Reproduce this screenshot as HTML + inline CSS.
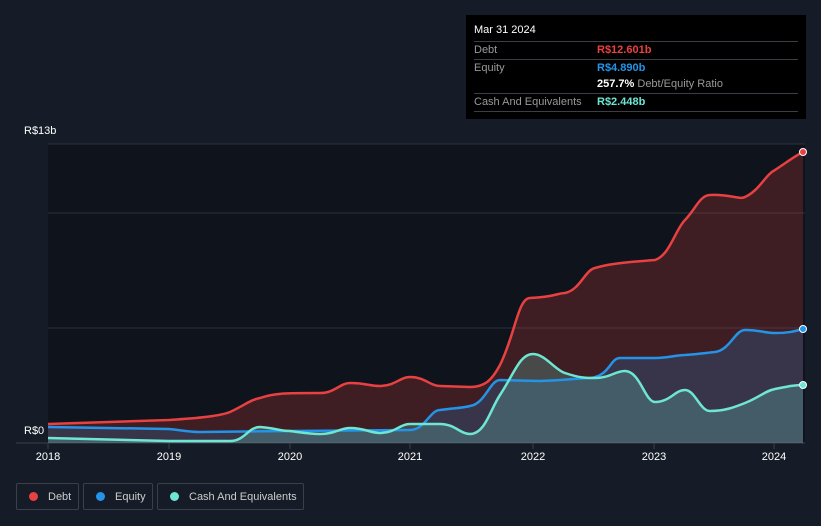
<!DOCTYPE html><html><head><style>
body{margin:0;width:821px;height:526px;background:#161c27;font-family:"Liberation Sans",sans-serif;overflow:hidden;position:relative}
.t{position:absolute;left:466px;top:15px;width:340px;height:104px;background:#000;color:#fff;font-size:11px}
.r{position:absolute;left:8px;width:324px;border-top:1px solid #3a3f47;height:17px;line-height:17px}
.r span{position:absolute;left:123px;font-weight:bold}
.lab{color:#999}
.ax{position:absolute;color:#fff;font-size:11px}
.lg{position:absolute;top:483px;height:27px;border:1px solid #3a404a;border-radius:2px;color:#ccc;font-size:11px;line-height:27px;box-sizing:border-box}
.lg i{display:inline-block;width:9px;height:9px;border-radius:50%;margin:0 10px 0 12px;vertical-align:-1px}
</style></head><body>
<div class="t"><div style="position:absolute;left:8px;top:9px">Mar 31 2024</div>
<div class="r" style="top:26px"><b class="lab" style="font-weight:normal">Debt</b><span style="color:#e84142">R$12.601b</span></div>
<div class="r" style="top:44px"><b class="lab" style="font-weight:normal">Equity</b><span style="color:#2394e8">R$4.890b</span></div>
<div class="r" style="top:61px;border:none"><span style="color:#fff">257.7% <b style="color:#999;font-weight:normal">Debt/Equity Ratio</b></span></div>
<div class="r" style="top:78px"><b class="lab" style="font-weight:normal">Cash And Equivalents</b><span style="color:#6ee6d2">R$2.448b</span></div>
<div class="r" style="top:96px"></div></div>
<div class="ax" style="left:24px;top:125px">R$13b</div>
<div class="ax" style="left:24px;top:425px">R$0</div>
<svg width="821" height="526" style="position:absolute;left:0;top:0">
<defs>
<path id="d" d="M48,424 L169,420 C200,418 220,416 230,412 C245,405 250,400 260,398 C275,393 285,393 320,393 C335,393 340,383 350,383 C365,383 370,386 380,386 C395,386 400,377 410,377 C425,377 430,386 440,386 L470,387 C485,387 492,380 500,365 C515,335 518,298 530,298 C555,297 558,293 565,293 C580,290 585,270 595,268 C605,265 615,263 655,260 C670,255 675,230 685,220 C695,210 700,195 710,195 C730,194 740,200 745,197 C760,190 765,175 775,170 C790,160 795,156 803,152"/>
<path id="e" d="M48,427 L169,429 C180,430 190,432 200,432 L290,431 L410,430 C425,430 430,410 440,410 C455,408 462,408 470,406 C485,404 490,380 500,380 L540,381 C570,380 580,378 590,378 C610,376 610,358 620,358 L655,358 C670,358 675,355 685,355 C700,354 705,353 715,352 C730,350 735,330 745,330 C760,330 765,333 775,333 C790,333 795,331 803,329"/>
<path id="c" d="M48,438 L169,441 L230,441 C245,441 248,427 260,427 C275,428 280,431 290,431 C305,433 310,434 320,434 C335,434 340,428 350,428 C365,428 370,433 380,433 C395,433 400,424 410,424 L440,424 C455,424 460,434 470,434 C485,434 490,410 500,395 C515,372 520,354 533,354 C545,354 555,370 565,373 C580,378 585,378 595,378 C610,378 615,371 625,371 C640,371 645,402 655,402 C670,402 675,390 685,390 C695,390 700,411 710,411 C725,411 735,407 745,403 C760,397 765,391 775,389 C790,386 795,385 803,385"/>
</defs>
<rect x="48" y="144" width="757" height="299" fill="#0f141c"/>
<line x1="48" x2="805" y1="144" y2="144" stroke="#2c313a"/>
<line x1="48" x2="805" y1="213" y2="213" stroke="#2c313a"/>
<line x1="48" x2="805" y1="328" y2="328" stroke="#2c313a"/>
<line x1="16" x2="805" y1="443" y2="443" stroke="#3a3f47"/>
<path d="M48,424 L169,420 C200,418 220,416 230,412 C245,405 250,400 260,398 C275,393 285,393 320,393 C335,393 340,383 350,383 C365,383 370,386 380,386 C395,386 400,377 410,377 C425,377 430,386 440,386 L470,387 C485,387 492,380 500,365 C515,335 518,298 530,298 C555,297 558,293 565,293 C580,290 585,270 595,268 C605,265 615,263 655,260 C670,255 675,230 685,220 C695,210 700,195 710,195 C730,194 740,200 745,197 C760,190 765,175 775,170 C790,160 795,156 803,152 L803,443 L48,443Z" fill="#e84142" fill-opacity=".22"/>
<path d="M48,427 L169,429 C180,430 190,432 200,432 L290,431 L410,430 C425,430 430,410 440,410 C455,408 462,408 470,406 C485,404 490,380 500,380 L540,381 C570,380 580,378 590,378 C610,376 610,358 620,358 L655,358 C670,358 675,355 685,355 C700,354 705,353 715,352 C730,350 735,330 745,330 C760,330 765,333 775,333 C790,333 795,331 803,329 L803,443 L48,443Z" fill="#2394e8" fill-opacity=".2"/>
<path d="M48,438 L169,441 L230,441 C245,441 248,427 260,427 C275,428 280,431 290,431 C305,433 310,434 320,434 C335,434 340,428 350,428 C365,428 370,433 380,433 C395,433 400,424 410,424 L440,424 C455,424 460,434 470,434 C485,434 490,410 500,395 C515,372 520,354 533,354 C545,354 555,370 565,373 C580,378 585,378 595,378 C610,378 615,371 625,371 C640,371 645,402 655,402 C670,402 675,390 685,390 C695,390 700,411 710,411 C725,411 735,407 745,403 C760,397 765,391 775,389 C790,386 795,385 803,385 L803,443 L48,443Z" fill="#6ee6d2" fill-opacity=".22"/>
<use href="#d" fill="none" stroke="#e84142" stroke-width="2.5"/>
<use href="#e" fill="none" stroke="#2394e8" stroke-width="2.5"/>
<use href="#c" fill="none" stroke="#6ee6d2" stroke-width="2.5"/>
<circle cx="803" cy="152" r="3.5" fill="#e84142" stroke="#fff"/>
<circle cx="803" cy="329" r="3.5" fill="#2394e8" stroke="#fff"/>
<circle cx="803" cy="385" r="3.5" fill="#6ee6d2" stroke="#fff"/>
<g stroke="#3a3f47"><line x1="48" x2="48" y1="443" y2="449"/><line x1="169" x2="169" y1="443" y2="449"/><line x1="290" x2="290" y1="443" y2="449"/><line x1="410" x2="410" y1="443" y2="449"/><line x1="533" x2="533" y1="443" y2="449"/><line x1="654" x2="654" y1="443" y2="449"/><line x1="774" x2="774" y1="443" y2="449"/></g>
<g fill="#fff" font-size="11" text-anchor="middle" font-family="Liberation Sans"><text x="48" y="460">2018</text><text x="169" y="460">2019</text><text x="290" y="460">2020</text><text x="410" y="460">2021</text><text x="533" y="460">2022</text><text x="654" y="460">2023</text><text x="774" y="460">2024</text></g>
</svg>
<div class="lg" style="left:16px;width:63px"><i style="background:#e84142"></i>Debt</div>
<div class="lg" style="left:83px;width:70px"><i style="background:#2394e8"></i>Equity</div>
<div class="lg" style="left:157px;width:147px"><i style="background:#6ee6d2"></i>Cash And Equivalents</div>
</body></html>
